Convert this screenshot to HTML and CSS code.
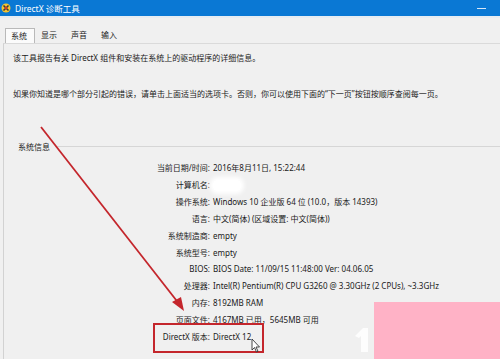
FILE: index.html
```html
<!DOCTYPE html>
<html lang="zh-CN">

<head>
    <meta charset="UTF-8" />
    <meta name="viewport" content="width=device-width, initial-scale=1.0" />
    <title>DirectX 诊断工具</title>
    <link rel="stylesheet" href="styles.css">
</head>

<body>
    <div class="window">
        <div class="titlebar">
            <svg class="app-icon" width="10" height="10" viewBox="0 0 10 10">
                <circle cx="5" cy="5" r="4.5" fill="#f4c430" />
                <path d="M2.5 2.5 L7.5 7.5 M7.5 2.5 L2.5 7.5" stroke="#3a3a3a" stroke-width="1.6" />
                <circle cx="5" cy="5" r="1.2" fill="#d8342c" />
            </svg>
            <span class="title">DirectX 诊断工具</span>
            <span class="minimize"></span>
        </div>

        <div class="tabs">
            <div class="tab active">系统</div>
            <div class="tab">显示</div>
            <div class="tab">声音</div>
            <div class="tab">输入</div>
        </div>

        <div class="panel">
            <p class="intro">该工具报告有关 DirectX 组件和安装在系统上的驱动程序的详细信息。</p>
            <p class="intro second">如果你知道是哪个部分引起的错误，请单击上面适当的选项卡。否则，你可以使用下面的“下一页”按钮按顺序查阅每一页。</p>

            <div class="group-head">
                <span class="group-label">系统信息</span>
                <span class="group-line"></span>
            </div>

            <div class="info">
                <div class="key">当前日期/时间:</div>
                <div class="val">2016年8月11日, 15:22:44</div>
                <div class="key">计算机名:</div>
                <div class="val"><span class="blur"></span></div>
                <div class="key">操作系统:</div>
                <div class="val">Windows 10 企业版 64 位 (10.0，版本 14393)</div>
                <div class="key">语言:</div>
                <div class="val">中文(简体) (区域设置: 中文(简体))</div>
                <div class="key">系统制造商:</div>
                <div class="val">empty</div>
                <div class="key">系统型号:</div>
                <div class="val">empty</div>
                <div class="key">BIOS:</div>
                <div class="val">BIOS Date: 11/09/15 11:48:00 Ver: 04.06.05</div>
                <div class="key">处理器:</div>
                <div class="val">Intel(R) Pentium(R) CPU G3260 @ 3.30GHz (2 CPUs), ~3.3GHz</div>
                <div class="key">内存:</div>
                <div class="val">8192MB RAM</div>
                <div class="key">页面文件:</div>
                <div class="val">4167MB 已用，5645MB 可用</div>
                <div class="key">DirectX 版本:</div>
                <div class="val">DirectX 12</div>
            </div>
        </div>
    </div>

    <!-- annotations drawn on top of the screenshot -->
    <svg class="arrow" width="500" height="359" viewBox="0 0 500 359">
        <line x1="41" y1="127" x2="180" y2="305" stroke="#c4262c" stroke-width="1.8" />
        <path d="M184 311 L172 302 L181 297 Z" fill="#c4262c" />
    </svg>
    <div class="highlight"></div>
    <svg class="cursor" width="10" height="15" viewBox="0 0 10 15">
        <path d="M1 1 L1 12 L3.5 9.5 L5.5 14 L7 13.3 L5 9 L8.5 9 Z" fill="#fff" stroke="#333" stroke-width="0.9" />
    </svg>
    <svg class="mark" width="22" height="28" viewBox="0 0 22 28">
        <path d="M10 2 L2 10 L6 12 L8 10 L8 26 L15 26 L15 2 Z" fill="#fff" opacity="0.85" />
    </svg>
    <div class="watermark"></div>
</body>

</html>
```

FILE: styles.css
```css
* {
    box-sizing: border-box;
    margin: 0;
    padding: 0;
}

body {
    font-family: "Noto Sans", "Noto Sans CJK SC", sans-serif;
    font-size: 8px;
    color: #1a1a1a;
    background: #f0f0f0;
    width: 500px;
    height: 359px;
    overflow: hidden;
    position: relative;
}

.titlebar {
    height: 16px;
    background: #0a78d4;
    color: #fff;
    display: flex;
    align-items: center;
    padding-left: 1px;
    gap: 4px;
}

.title {
    font-size: 8.5px;
    flex: 1;
}

.minimize {
    width: 9px;
    height: 1px;
    background: #d8e8f8;
    margin-right: 14px;
}

.tabs {
    display: flex;
    padding: 10px 0 0 5px;
    height: 27px;
    background: #f0f0f0;
    border-top: 2px solid #e6ecf2;
}

.tab {
    width: 30px;
    height: 15px;
    line-height: 14px;
    text-align: center;
    padding-right: 2px;
}

.tab.active {
    background: #fbfbfb;
    border: 1px solid #b9b9b9;
    border-bottom: none;
}

.panel {
    margin-left: 3px;
    border-top: 1px solid #dadada;
    border-left: 1px solid #d2d2d2;
    height: 316px;
    padding: 8px 0 0 9px;
}

.intro {
    line-height: 12px;
}

.intro.second {
    margin-top: 24px;
}

.group-head {
    display: flex;
    align-items: center;
    gap: 6px;
    margin-top: 41px;
    padding-left: 5px;
    line-height: 12px;
}

.group-line {
    flex: 1;
    height: 1px;
    background: #d6d6d6;
    margin-top: -1px;
}

.info {
    display: grid;
    grid-template-columns: 197px auto;
    column-gap: 3px;
    margin-top: 7px;
    line-height: 16.9px;
}

.key {
    text-align: right;
}

.blur {
    display: inline-block;
    width: 28px;
    height: 11px;
    border-radius: 5px;
    background: #fff;
    vertical-align: middle;
    box-shadow: 0 0 4px 3px #fff;
}

.arrow {
    position: absolute;
    left: 0;
    top: 0;
}

.highlight {
    position: absolute;
    left: 153px;
    top: 323px;
    width: 111px;
    height: 30px;
    border: 2px solid #c4262c;
}

.cursor {
    position: absolute;
    left: 251px;
    top: 338px;
}

.mark {
    position: absolute;
    left: 353px;
    top: 326px;
}

.watermark {
    position: absolute;
    left: 374px;
    top: 302px;
    width: 126px;
    height: 57px;
    background: #ffb2c6;
}
```
